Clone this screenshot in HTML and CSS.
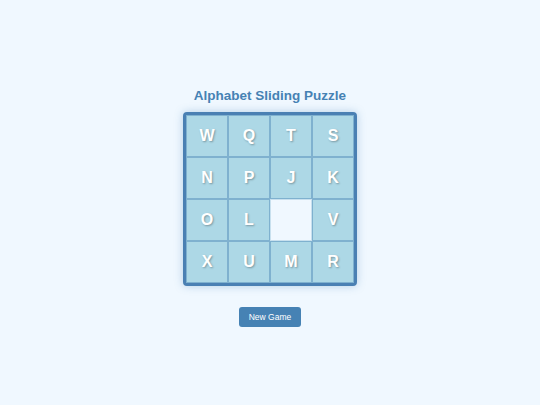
FILE: index.html
```html
<!DOCTYPE html>
<html>
<head>
<meta charset="utf-8">
<link rel="stylesheet" href="styles.css">
</head>
<body>
<div class="app">
  <h1 class="title">Alphabet Sliding Puzzle</h1>
  <div class="board">
    <div class="tile">W</div><div class="tile">Q</div><div class="tile">T</div><div class="tile">S</div>
    <div class="tile">N</div><div class="tile">P</div><div class="tile">J</div><div class="tile">K</div>
    <div class="tile">O</div><div class="tile">L</div><div class="tile empty"></div><div class="tile">V</div>
    <div class="tile">X</div><div class="tile">U</div><div class="tile">M</div><div class="tile">R</div>
  </div>
  <button class="btn">New Game</button>
</div>
</body>
</html>
```
FILE: styles.css
```css
html, body {
  margin: 0;
  padding: 0;
  background: #f0f8ff;
  font-family: "Liberation Sans", Arial, sans-serif;
}
.app {
  display: flex;
  flex-direction: column;
  align-items: center;
  padding-top: 87px;
}
.title {
  margin: 0 0 7px 0;
  font-size: 13.5px;
  line-height: 18px;
  font-weight: bold;
  color: #4682b4;
}
.board {
  display: grid;
  grid-template-columns: repeat(4, 42px);
  grid-template-rows: repeat(4, 42px);
  border: 3px solid #4a80b3;
  border-radius: 4px;
  background: #f0f8ff;
  box-shadow: 0 0 8px rgba(70, 130, 180, 0.35);
}
.tile {
  box-sizing: border-box;
  border: 1px solid #7fb1cf;
  background: #add8e6;
  color: #ffffff;
  font-size: 16px;
  font-weight: bold;
  display: flex;
  align-items: center;
  justify-content: center;
  text-shadow: 1px 1px 2px rgba(0, 0, 0, 0.3);
}
.tile.empty {
  background: #f0f8ff;
  border-color: #c8e0ee;
}
.btn {
  margin-top: 21px;
  width: 62px;
  height: 20px;
  padding: 0;
  border: none;
  border-radius: 3px;
  background: #4682b4;
  color: #ffffff;
  font-family: "Liberation Sans", Arial, sans-serif;
  font-size: 8.5px;
}
```
